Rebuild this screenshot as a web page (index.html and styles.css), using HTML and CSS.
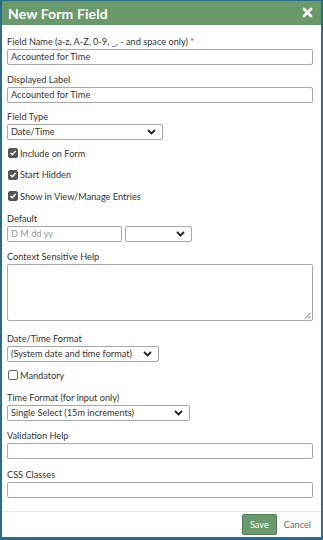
FILE: index.html
```html
<!DOCTYPE html>
<html>
<head>
<meta charset="utf-8">
<link rel="stylesheet" href="styles.css">
</head>
<body>
<div class="dialog">
  <div class="header">
    <span class="title">New Form Field</span>
    <svg class="close" width="11" height="11" viewBox="0 0 11 11"><path d="M2 2 L9 9 M9 2 L2 9" stroke="#fff" stroke-width="2.8" stroke-linecap="round"/></svg>
  </div>
  <div class="body">
    <div class="field">
      <label class="lbl">Field Name (a-z, A-Z, 0-9, _, - and space only) <span class="req">*</span></label>
      <div class="input full">Accounted for Time</div>
    </div>
    <div class="field">
      <label class="lbl">Displayed Label</label>
      <div class="input full">Accounted for Time</div>
    </div>
    <div class="field">
      <label class="lbl">Field Type</label>
      <div class="select w156"><span>Date/Time</span><svg class="chev" width="9" height="6" viewBox="0 0 9 6"><path d="M1 1 L4.5 4.5 L8 1" fill="none" stroke="#222" stroke-width="1.8"/></svg></div>
    </div>
    <div class="check"><span class="box on"><svg width="8" height="8" viewBox="0 0 8 8"><path d="M1.5 4 L3.3 5.8 L6.7 2" fill="none" stroke="#fff" stroke-width="1.4"/></svg></span>Include on Form</div>
    <div class="check"><span class="box on"><svg width="8" height="8" viewBox="0 0 8 8"><path d="M1.5 4 L3.3 5.8 L6.7 2" fill="none" stroke="#fff" stroke-width="1.4"/></svg></span>Start Hidden</div>
    <div class="check"><span class="box on"><svg width="8" height="8" viewBox="0 0 8 8"><path d="M1.5 4 L3.3 5.8 L6.7 2" fill="none" stroke="#fff" stroke-width="1.4"/></svg></span>Show in View/Manage Entries</div>
    <div class="field">
      <label class="lbl">Default</label>
      <div class="row">
        <div class="input w114 ph">D M dd yy</div>
        <div class="select w67"><span></span><svg class="chev" width="9" height="6" viewBox="0 0 9 6"><path d="M1 1 L4.5 4.5 L8 1" fill="none" stroke="#222" stroke-width="1.8"/></svg></div>
      </div>
    </div>
    <div class="field tall">
      <label class="lbl">Context Sensitive Help</label>
      <div class="textarea full"><svg class="grip" width="7" height="7" viewBox="0 0 7 7"><path d="M6.5 1 L1 6.5 M6.5 4 L4 6.5" stroke="#555" stroke-width="0.9"/></svg></div>
    </div>
    <div class="field">
      <label class="lbl">Date/Time Format</label>
      <div class="select w151"><span>(System date and time format)</span><svg class="chev" width="9" height="6" viewBox="0 0 9 6"><path d="M1 1 L4.5 4.5 L8 1" fill="none" stroke="#222" stroke-width="1.8"/></svg></div>
    </div>
    <div class="check"><span class="box"></span>Mandatory</div>
    <div class="field">
      <label class="lbl">Time Format (for input only)</label>
      <div class="select w182"><span>Single Select (15m increments)</span><svg class="chev" width="9" height="6" viewBox="0 0 9 6"><path d="M1 1 L4.5 4.5 L8 1" fill="none" stroke="#222" stroke-width="1.8"/></svg></div>
    </div>
    <div class="field wide">
      <label class="lbl">Validation Help</label>
      <div class="input full"></div>
    </div>
    <div class="field">
      <label class="lbl">CSS Classes</label>
      <div class="input full"></div>
    </div>
  </div>
  <div class="footer">
    <button class="save">Save</button>
    <span class="cancel">Cancel</span>
  </div>
</div>
</body>
</html>
```
FILE: styles.css
```css
html, body { margin: 0; padding: 0; }
body {
  width: 323px;
  height: 540px;
  background: #2b6b8c;
  font-family: Lato, "Open Sans", sans-serif;
  font-size: 9.2px;
  color: #333;
  overflow: hidden;
}
.dialog {
  box-sizing: border-box;
  width: 319px;
  height: 536px;
  margin: 1px 0 0 2px;
  background: #fff;
  display: flex;
  flex-direction: column;
}
.header {
  background: #6a9a6c;
  height: 24px;
  display: flex;
  align-items: center;
  justify-content: space-between;
  padding: 0 8px 0 6px;
  flex: none;
}
.title {
  color: #fff;
  font-size: 14px;
  font-weight: bold;
  letter-spacing: 0.1px;
}
.close { margin-top: -2px; }
.body {
  padding: 11px 8px 0 5px;
  flex: 1;
  min-height: 0;
}
.field { margin-bottom: 8.5px; }
.field.tall { margin-bottom: 12.5px; }
.field.wide { margin-bottom: 10.5px; }
.lbl {
  display: block;
  line-height: 12px;
  margin-bottom: 1px;
}
.req { color: #d22; }
.input, .select, .textarea {
  box-sizing: border-box;
  border: 1px solid #a7a7a7;
  border-radius: 2px;
  background: #fff;
  height: 16px;
  line-height: 14px;
  padding: 0 3px;
  color: #333;
}
.full { width: 306px; }
.ph { color: #999; }
.select {
  display: flex;
  justify-content: space-between;
  align-items: center;
  padding: 0 6px 0 3px;
}
.chev { flex: none; }
.w156 { width: 156px; }
.w151 { width: 152px; }
.w182 { width: 183px; }
.w114 { width: 115px; }
.w67 { width: 67px; }
.row { display: flex; gap: 3px; }
.textarea {
  height: 57px;
  position: relative;
}
.grip { position: absolute; right: 1px; bottom: 1px; }
.check {
  display: flex;
  align-items: center;
  height: 12px;
  margin: -1.5px 0 11px 1px;
}
.box {
  box-sizing: border-box;
  width: 10px;
  height: 10px;
  border-radius: 2px;
  margin-right: 2px;
  border: 1px solid #666;
  display: flex;
  align-items: center;
  justify-content: center;
  background: #fff;
}
.box.on { background: #555; border-color: #555; }
.footer {
  flex: none;
  border-top: 1px solid #e6e6e6;
  height: 25px;
  display: flex;
  align-items: center;
  justify-content: flex-end;
  padding: 0 10px 0 0;
}
.save {
  font-family: Lato, sans-serif;
  font-size: 9.2px;
  color: #fff;
  background: #6a9a6c;
  border: 1px solid #4d7d50;
  border-radius: 2px;
  width: 35px;
  height: 21px;
  padding: 0;
  margin-right: 7px;
}
.cancel { color: #666; }
```
